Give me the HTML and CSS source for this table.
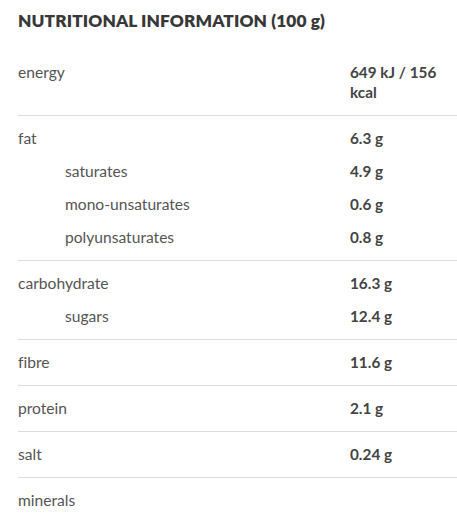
FILE: index.html
```html
<!DOCTYPE html>
<html lang="en">
<head>
<meta charset="utf-8">
<title>Nutritional information</title>
<link rel="stylesheet" href="styles.css">
</head>
<body>
<div class="panel">
  <h2 class="title">NUTRITIONAL INFORMATION (100 g)</h2>
  <div class="table">
    <div class="section">
      <div class="row"><span class="label">energy</span><span class="value">649 kJ / 156 kcal</span></div>
    </div>
    <div class="section">
      <div class="row"><span class="label">fat</span><span class="value">6.3 g</span></div>
      <div class="row sub"><span class="label">saturates</span><span class="value">4.9 g</span></div>
      <div class="row sub"><span class="label">mono-unsaturates</span><span class="value">0.6 g</span></div>
      <div class="row sub"><span class="label">polyunsaturates</span><span class="value">0.8 g</span></div>
    </div>
    <div class="section">
      <div class="row"><span class="label">carbohydrate</span><span class="value">16.3 g</span></div>
      <div class="row sub"><span class="label">sugars</span><span class="value">12.4 g</span></div>
    </div>
    <div class="section">
      <div class="row"><span class="label">fibre</span><span class="value">11.6 g</span></div>
    </div>
    <div class="section">
      <div class="row"><span class="label">protein</span><span class="value">2.1 g</span></div>
    </div>
    <div class="section">
      <div class="row"><span class="label">salt</span><span class="value">0.24 g</span></div>
    </div>
    <div class="section last">
      <div class="row"><span class="label">minerals</span><span class="value"></span></div>
      <div class="row"><span class="label note">In % of the reference intake (NRV)</span><span class="value"></span></div>
    </div>
  </div>
</div>
</body>
</html>
```
FILE: styles.css
```css
html, body {
  margin: 0;
  padding: 0;
  background: #ffffff;
  overflow: hidden;
}

body {
  font-family: Lato, "Open Sans", sans-serif;
  color: #4a4a4a;
  font-variant-ligatures: none;
}

.panel {
  width: 520px;
  padding: 0 0 0 18px;
}

.title {
  margin: 0;
  padding-top: 9px;
  font-size: 17.3px;
  line-height: 24px;
  font-weight: 800;
  color: #383838;
  letter-spacing: 0.1px;
  height: 38px;
  box-sizing: border-box;
}

.table {
  padding-top: 12px;
}

.section {
  padding: 6px 0;
  border-bottom: 1px solid #dcdcdc;
}

.section.last {
  border-bottom: none;
}

.row {
  display: grid;
  grid-template-columns: 332px 95px;
  padding: 6px 0 7px;
  font-size: 15.6px;
  line-height: 20px;
}

.row.sub .label {
  padding-left: 47px;
}

.label {
  color: #555555;
}

.value {
  font-weight: 700;
  font-size: 15.3px;
  color: #444444;
}

.note {
  font-size: 13px;
}
```
